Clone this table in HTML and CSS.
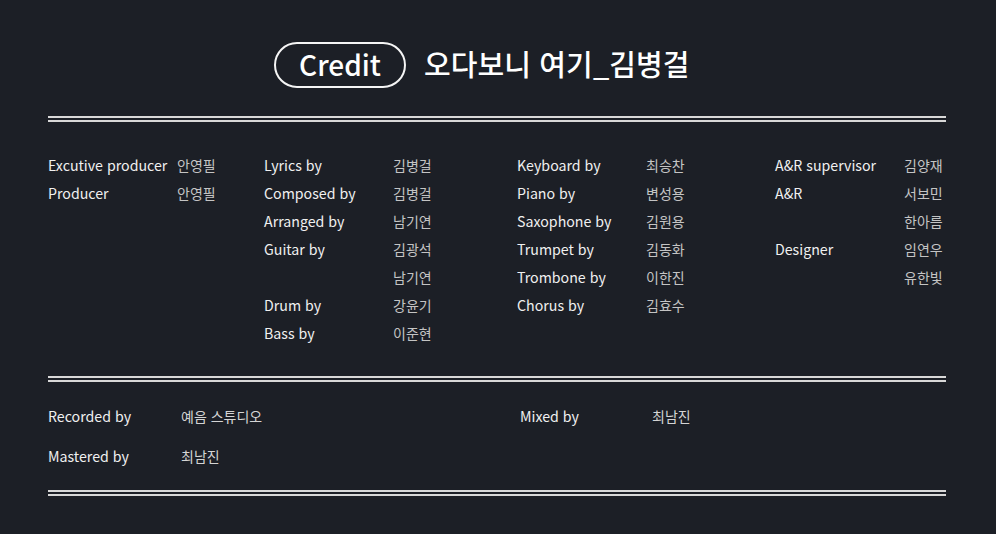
FILE: index.html
```html
<!DOCTYPE html>
<html lang="ko">
<head>
<meta charset="utf-8">
<title>Credit</title>
<link rel="stylesheet" href="styles.css">
</head>
<body>
<div class="page">
  <header class="head">
    <span class="pill">Credit</span>
    <h1 class="title">오다보니 여기_김병걸</h1>
  </header>
  <div class="rule"></div>
  <section class="credits">
    <div class="col c1">
      <div class="row"><span class="lbl">Excutive producer</span><span class="val">안영필</span></div>
      <div class="row"><span class="lbl">Producer</span><span class="val">안영필</span></div>
    </div>
    <div class="col c2">
      <div class="row"><span class="lbl">Lyrics by</span><span class="val">김병걸</span></div>
      <div class="row"><span class="lbl">Composed by</span><span class="val">김병걸</span></div>
      <div class="row"><span class="lbl">Arranged by</span><span class="val">남기연</span></div>
      <div class="row"><span class="lbl">Guitar by</span><span class="val">김광석</span></div>
      <div class="row"><span class="lbl"></span><span class="val">남기연</span></div>
      <div class="row"><span class="lbl">Drum by</span><span class="val">강윤기</span></div>
      <div class="row"><span class="lbl">Bass by</span><span class="val">이준현</span></div>
    </div>
    <div class="col c3">
      <div class="row"><span class="lbl">Keyboard by</span><span class="val">최승찬</span></div>
      <div class="row"><span class="lbl">Piano by</span><span class="val">변성용</span></div>
      <div class="row"><span class="lbl">Saxophone by</span><span class="val">김원용</span></div>
      <div class="row"><span class="lbl">Trumpet by</span><span class="val">김동화</span></div>
      <div class="row"><span class="lbl">Trombone by</span><span class="val">이한진</span></div>
      <div class="row"><span class="lbl">Chorus by</span><span class="val">김효수</span></div>
    </div>
    <div class="col c4">
      <div class="row"><span class="lbl">A&amp;R supervisor</span><span class="val">김양재</span></div>
      <div class="row"><span class="lbl">A&amp;R</span><span class="val">서보민</span></div>
      <div class="row"><span class="lbl"></span><span class="val">한아름</span></div>
      <div class="row"><span class="lbl">Designer</span><span class="val">임연우</span></div>
      <div class="row"><span class="lbl"></span><span class="val">유한빛</span></div>
    </div>
  </section>
  <div class="rule"></div>
  <section class="studio">
    <div class="srow"><span class="slbl">Recorded by</span><span class="sval">예음 스튜디오</span></div>
    <div class="srow right"><span class="slbl">Mixed by</span><span class="sval">최남진</span></div>
    <div class="srow"><span class="slbl">Mastered by</span><span class="sval">최남진</span></div>
  </section>
  <div class="rule"></div>
</div>
</body>
</html>
```

FILE: styles.css
```css
* { box-sizing: border-box; }
html, body {
  margin: 0;
  padding: 0;
  background: #1c1f26;
}
body {
  font-family: "Noto Sans CJK KR", "Noto Sans", sans-serif;
  color: #f2f2f2;
  width: 996px;
  height: 534px;
  overflow: hidden;
}
.page {
  margin-left: 48px;
  width: 898px;
}
.head {
  display: flex;
  align-items: center;
  justify-content: flex-start;
  gap: 18px;
  padding-top: 42px;
  padding-left: 226px;
  height: 88px;
  margin-bottom: 28px;
}
.pill {
  display: flex;
  align-items: center;
  justify-content: center;
  width: 132px;
  height: 46px;
  border: 2px solid #f5f5f5;
  border-radius: 23px;
  font-size: 28px;
  font-weight: 500;
  color: #fff;
  line-height: 1;
  padding-bottom: 3px;
}
.title {
  margin: 0;
  font-size: 29px;
  font-weight: 500;
  color: #fff;
  letter-spacing: 0.1px;
  line-height: 1;
  padding-bottom: 3px;
}
.rule {
  height: 6px;
  border-top: 2px solid #d8d8d8;
  border-bottom: 2px solid #d8d8d8;
}
.credits {
  display: grid;
  grid-template-columns: 216px 253px 258px 171px;
  padding-top: 29px;
  padding-bottom: 29px;
}
.row {
  display: grid;
  grid-template-columns: 129px auto;
  height: 28px;
  align-items: center;
  font-size: 14.2px;
  white-space: nowrap;
}
.lbl { color: #f0f0f0; }
.val { color: #c4c4c4; font-size: 14px; }
.studio {
  display: grid;
  grid-template-columns: 472px 426px;
  padding-top: 14px;
  padding-bottom: 14px;
}
.srow {
  display: grid;
  grid-template-columns: 133px auto;
  height: 40px;
  align-items: center;
  font-size: 14.2px;
}
.srow.right { grid-template-columns: 132px auto; }
.slbl { color: #f0f0f0; }
.sval { color: #d4d4d4; font-size: 14px; }
```
